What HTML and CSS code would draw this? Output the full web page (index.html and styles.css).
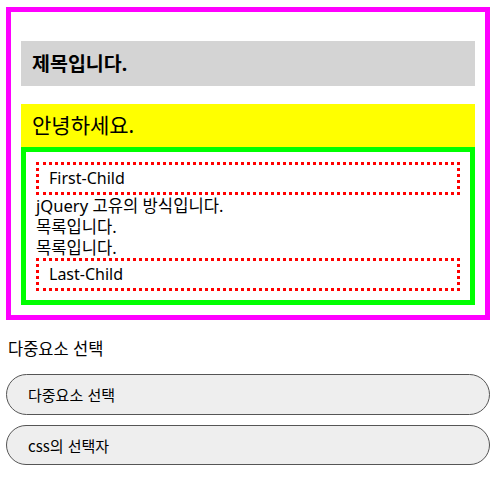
FILE: index.html
```html
<!DOCTYPE html>
<html lang="ko">
<head>
<meta charset="utf-8">
<link rel="stylesheet" href="styles.css">
</head>
<body>
<div class="outer">
  <h3 class="title">제목입니다.</h3>
  <p class="hello">안녕하세요.</p>
  <ul class="list">
    <li class="edge">First-Child</li>
    <li>jQuery 고유의 방식입니다.</li>
    <li>목록입니다.</li>
    <li>목록입니다.</li>
    <li class="edge">Last-Child</li>
  </ul>
</div>
<p class="label">다중요소 선택</p>
<button class="btn">다중요소 선택</button>
<button class="btn">css의 선택자</button>
</body>
</html>
```
FILE: styles.css
```css
html, body {
  margin: 0;
  padding: 0;
  background: #fff;
}
body {
  font-family: "Noto Sans", "Noto Sans CJK KR", sans-serif;
  font-size: 16px;
  color: #000;
}
.outer {
  margin: 7px 7px 0 6px;
  border: 5px solid #ff00ff;
  padding: 10px;
}
.title {
  margin: 19px 0 18px 0;
  background: #d4d4d4;
  font-size: 19.5px;
  font-weight: bold;
  line-height: 25px;
  padding: 10px 11px;
}
.hello {
  margin: 0;
  background: #ffff00;
  font-size: 21px;
  line-height: 23px;
  padding: 10px 11px;
}
.list {
  list-style: none;
  margin: 0;
  padding: 10px 10px 9px 10px;
  border: 5px solid #00ff00;
}
.list li {
  line-height: 21px;
  font-size: 16.6px;
}
.list .edge {
  border: 3px dotted #ff0000;
  padding: 3px 10px;
  font-size: 16px;
}
.label {
  margin: 18px 0 0 8px;
  line-height: 22px;
  font-size: 16.5px;
}
.btn {
  display: block;
  box-sizing: border-box;
  width: 484px;
  margin: 14px 0 0 6px;
  height: 41px;
  padding: 0 21px;
  text-align: left;
  background: #eeeeee;
  border: 1px solid #555555;
  border-radius: 21px;
  font-family: "Noto Sans CJK KR", sans-serif;
  font-size: 15px;
  color: #000;
}
.btn + .btn {
  margin-top: 10px;
  height: 40px;
}
```
